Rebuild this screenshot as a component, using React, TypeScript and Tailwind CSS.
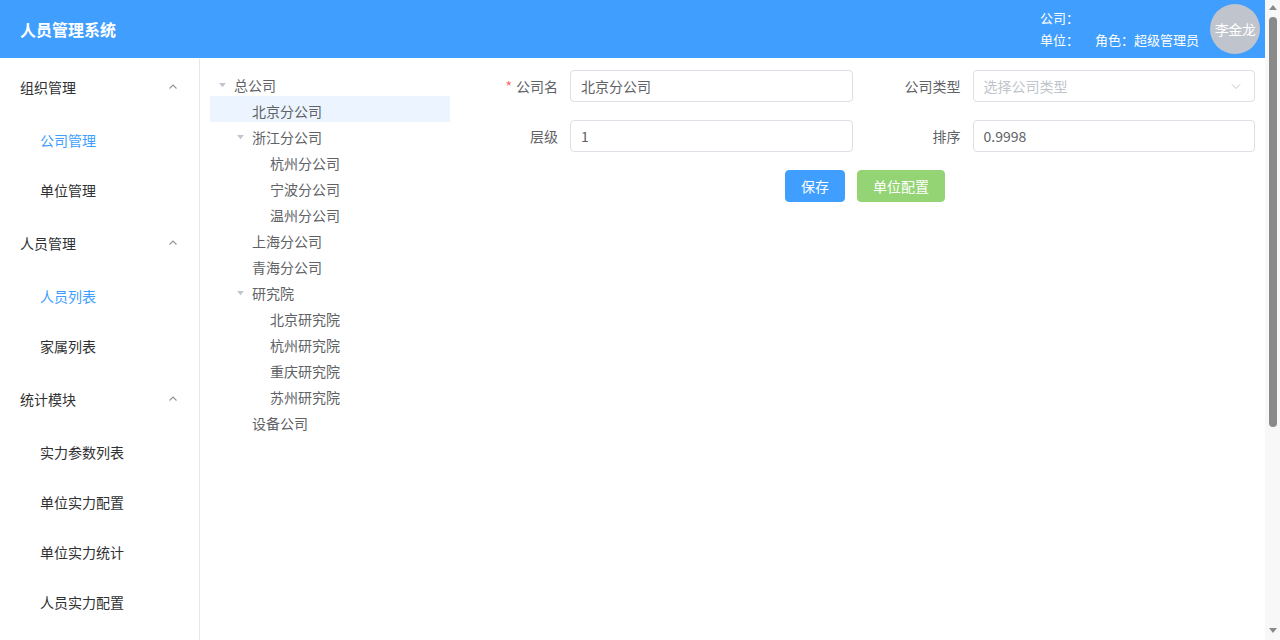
import React from "react";

const font = "font-['Microsoft_YaHei','Noto_Sans_CJK_SC',sans-serif]";

type MenuGroup = {
  title: string;
  items: Array<{ label: string; active?: boolean }>;
};

const menu: MenuGroup[] = [
  {
    title: "组织管理",
    items: [{ label: "公司管理", active: true }, { label: "单位管理" }],
  },
  {
    title: "人员管理",
    items: [{ label: "人员列表", active: true }, { label: "家属列表" }],
  },
  {
    title: "统计模块",
    items: [
      { label: "实力参数列表" },
      { label: "单位实力配置" },
      { label: "单位实力统计" },
      { label: "人员实力配置" },
    ],
  },
];

type TreeRow = { label: string; level: number; caret?: boolean; selected?: boolean };

const tree: TreeRow[] = [
  { label: "总公司", level: 0, caret: true },
  { label: "北京分公司", level: 1, selected: true },
  { label: "浙江分公司", level: 1, caret: true },
  { label: "杭州分公司", level: 2 },
  { label: "宁波分公司", level: 2 },
  { label: "温州分公司", level: 2 },
  { label: "上海分公司", level: 1 },
  { label: "青海分公司", level: 1 },
  { label: "研究院", level: 1, caret: true },
  { label: "北京研究院", level: 2 },
  { label: "杭州研究院", level: 2 },
  { label: "重庆研究院", level: 2 },
  { label: "苏州研究院", level: 2 },
  { label: "设备公司", level: 1 },
];

function ChevronUp() {
  return (
    <svg viewBox="0 0 12 12" className="h-3 w-3" fill="none" stroke="#909399" strokeWidth={1.1}>
      <path d="M2.5 7.5L6 4l3.5 3.5" />
    </svg>
  );
}

function Caret() {
  return (
    <svg viewBox="0 0 8 6" className="h-[5px] w-[7px]">
      <path d="M0 0h8L4 5z" fill="#c0c4cc" />
    </svg>
  );
}

function FormItem({
  label,
  required,
  children,
}: {
  label: string;
  required?: boolean;
  children: React.ReactNode;
}) {
  return (
    <div className="flex flex-1 items-center">
      <label className="w-[80px] shrink-0 pr-3 text-right text-[14px] leading-[32px] text-[#606266]">
        {required && <span className="mr-1 text-[#f56c6c]">*</span>}
        {label}
      </label>
      <div className="flex-1">{children}</div>
    </div>
  );
}

function Input({ value }: { value: string }) {
  return (
    <div className="flex h-[32px] items-center rounded border border-[#dcdfe6] bg-white px-[10px] text-[14px] text-[#606266]">
      {value}
    </div>
  );
}

// window scrollbar as seen in the screenshot (page is taller than the viewport)
function Scrollbar() {
  return (
    <div className="flex h-screen w-[15px] shrink-0 flex-col items-center bg-[#f8f8f8]">
      <svg viewBox="0 0 8 5" className="mt-[5px] h-[5px] w-[8px]">
        <path d="M0 5L4 0l4 5z" fill="#8a8a8a" />
      </svg>
      <div className="mt-[7px] h-[410px] w-[8px] rounded-full bg-[#8a8a8a]" />
      <div className="flex-1" />
      <svg viewBox="0 0 8 5" className="mb-[7px] h-[5px] w-[8px]">
        <path d="M0 0h8L4 5z" fill="#8a8a8a" />
      </svg>
    </div>
  );
}

export default function App() {
  return (
    <div className={`${font} flex h-screen overflow-hidden bg-white`}>
      <div className="min-h-[950px] flex-1">
        <header className="flex h-[58px] items-center justify-between bg-[#409eff] pl-5 pr-[5px] text-white">
          <h1 className="-mt-px text-[16px] font-bold">人员管理系统</h1>
          <div className="flex items-center gap-[11px]">
            <div className="text-[13px] leading-[22px]">
              <div>公司：</div>
              <div className="flex gap-[16px]">
                <span>单位：</span>
                <span>角色：超级管理员</span>
              </div>
            </div>
            <div className="flex h-[50px] w-[50px] items-center justify-center rounded-full bg-[#c0c4cc] text-[14px] tracking-[-0.5px]">
              李金龙
            </div>
          </div>
        </header>

        <div className="mt-[1px] flex min-h-[890px]">
          <aside className="w-[200px] shrink-0 border-r border-[#e6e6e6]">
            {menu.map((group) => (
              <div key={group.title}>
                <div className="flex h-[56px] items-center justify-between pl-5 pr-[20px] text-[14px] text-[#303133]">
                  <span>{group.title}</span>
                  <ChevronUp />
                </div>
                {group.items.map((item) => (
                  <div
                    key={item.label}
                    className={`flex h-[50px] items-center pl-10 text-[14px] ${
                      item.active ? "text-[#409eff]" : "text-[#303133]"
                    }`}
                  >
                    {item.label}
                  </div>
                ))}
              </div>
            ))}
          </aside>

          <main className="flex flex-1 pl-[10px] pr-[10px] pt-[11px]">
            <div className="w-[240px] shrink-0">
              {tree.map((row) => (
                <div
                  key={row.label}
                  className={`flex h-[26px] items-center pt-[4px] text-[14px] text-[#606266] ${
                    row.selected ? "bg-[#ecf5ff]" : ""
                  }`}
                  style={{ paddingLeft: row.level * 18 }}
                >
                  <span className="flex w-[24px] items-center justify-center">
                    {row.caret && <Caret />}
                  </span>
                  <span>{row.label}</span>
                </div>
              ))}
            </div>

            <div className="ml-[40px] flex-1">
              <div className="flex gap-[40px]">
                <FormItem label="公司名" required>
                  <Input value="北京分公司" />
                </FormItem>
                <FormItem label="公司类型">
                  <div className="flex h-[32px] items-center justify-between rounded border border-[#dcdfe6] bg-white pl-[10px] pr-[12px] text-[14px] text-[#c0c4cc]">
                    <span>选择公司类型</span>
                    <svg viewBox="0 0 12 12" className="h-3 w-3" fill="none" stroke="#c0c4cc" strokeWidth={1}>
                      <path d="M2 4.5L6 8.5l4-4" />
                    </svg>
                  </div>
                </FormItem>
              </div>
              <div className="mt-[18px] flex gap-[40px]">
                <FormItem label="层级">
                  <Input value="1" />
                </FormItem>
                <FormItem label="排序">
                  <Input value="0.9998" />
                </FormItem>
              </div>
              <div className="mt-[18px] flex gap-3 pl-[295px]">
                <button
                  type="button"
                  className="h-[32px] rounded border border-[#409eff] bg-[#409eff] px-[15px] text-[14px] text-white"
                >
                  保存
                </button>
                <button
                  type="button"
                  className="h-[32px] rounded border border-[#95d475] bg-[#95d475] px-[15px] text-[14px] text-white"
                >
                  单位配置
                </button>
              </div>
            </div>
          </main>
        </div>
      </div>
      <Scrollbar />
    </div>
  );
}
